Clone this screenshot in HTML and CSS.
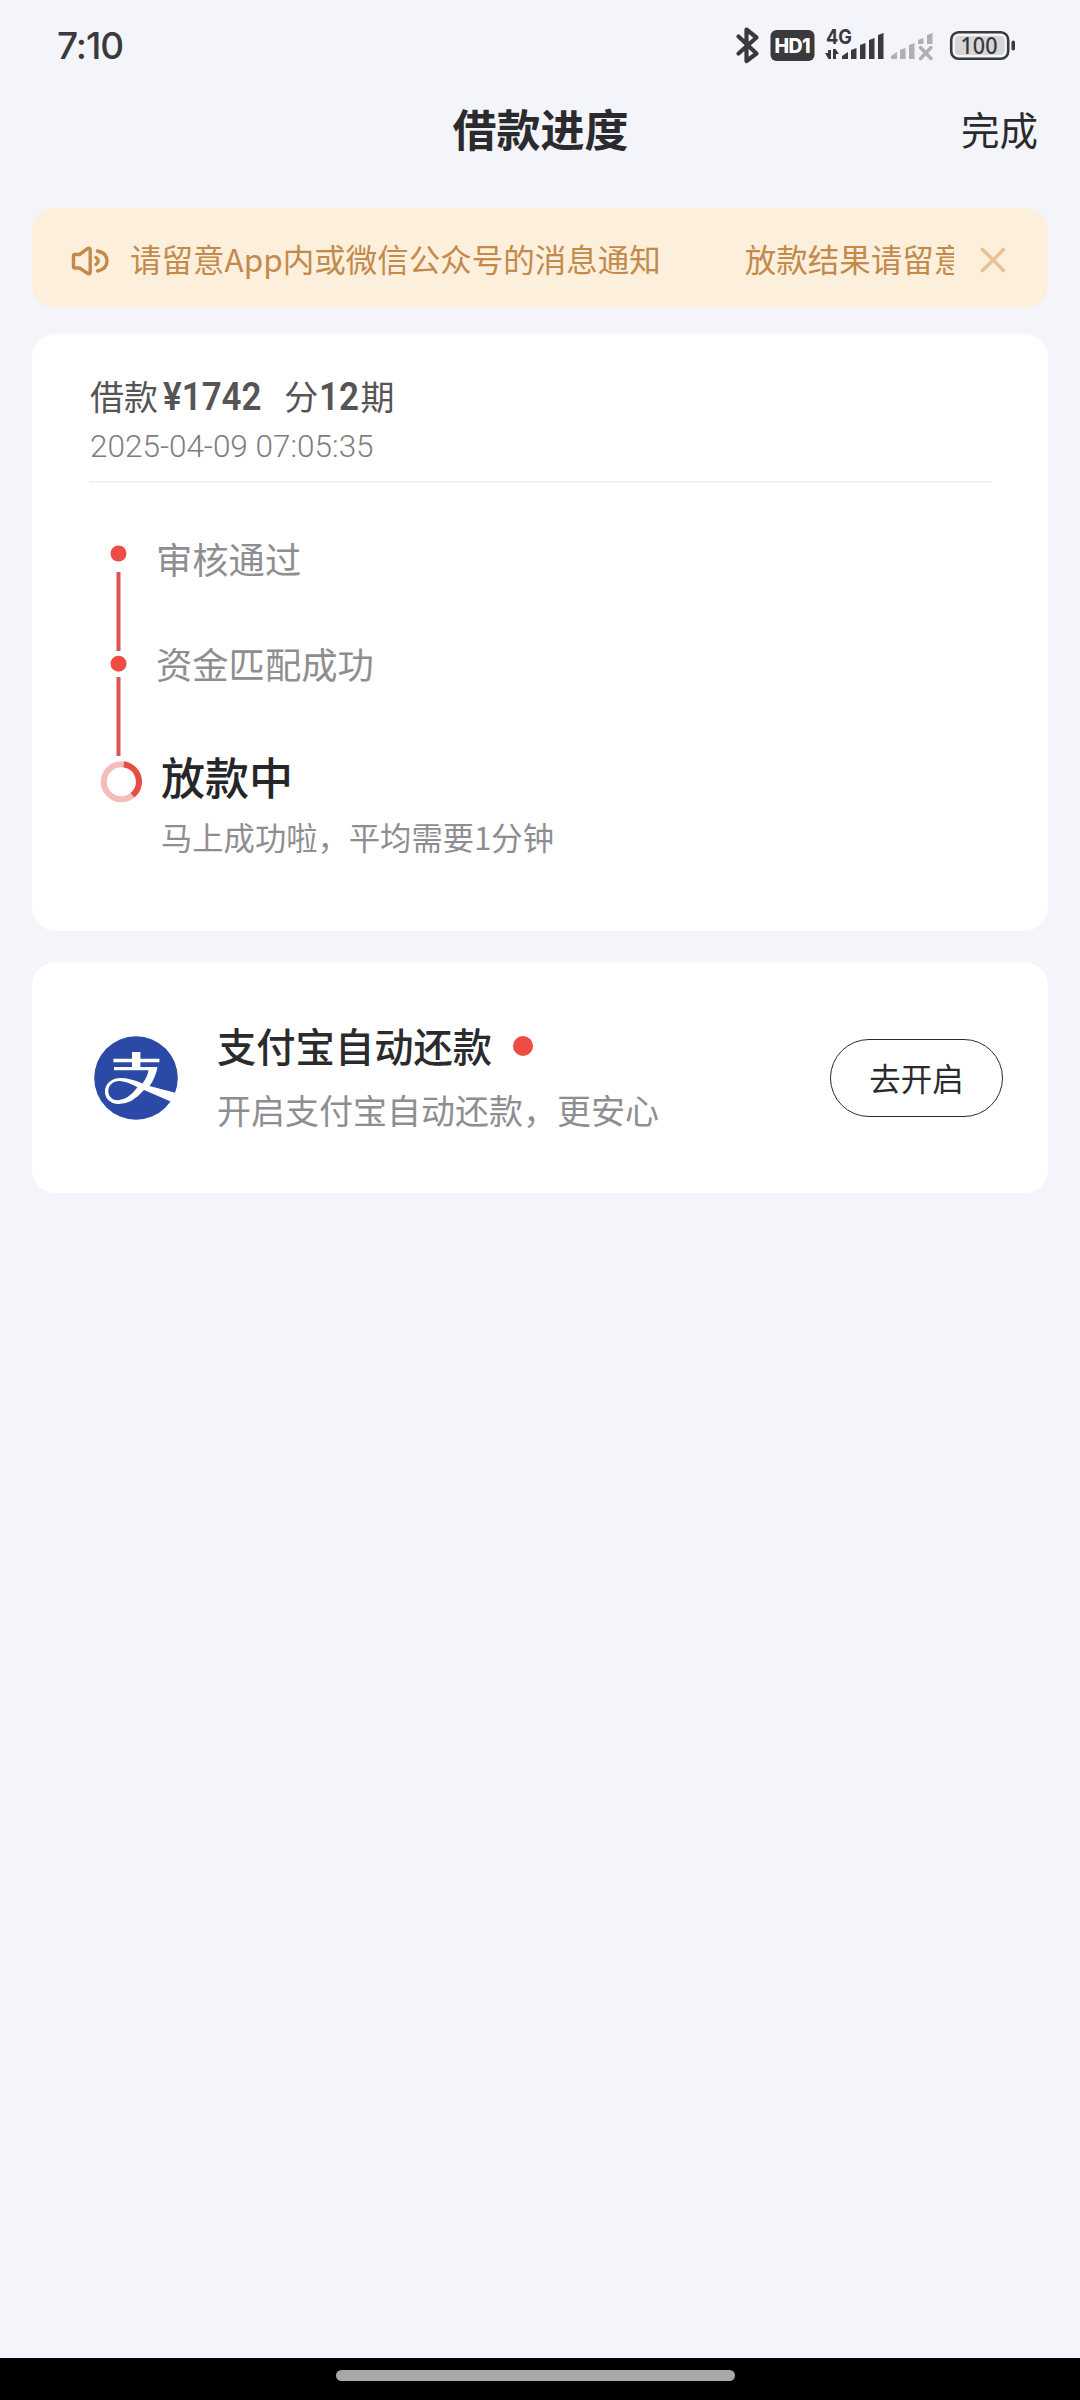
FILE: index.html
```html
<!DOCTYPE html>
<html lang="zh-CN">
<head>
<meta charset="utf-8">
<title>借款进度</title>
<link rel="stylesheet" href="styles.css">
</head>
<body>
<div class="screen">
  <div class="statusbar">
    <span class="clock">7:10</span>
    <svg class="status-icons" width="284" height="44" viewBox="734 22 284 44">
      <path class="bt" d="M738.500 36.500L756.500 53.500L746.500 61V29.500L756.500 37.500L738.500 53.500"/>
      <rect x="770.500" y="30" width="44" height="31" rx="6" fill="#3a3a3c"/>
      <text class="hd" x="792.500" y="52.500" textLength="36">HD1</text>
      <text class="net" x="826" y="44" textLength="26" lengthAdjust="spacingAndGlyphs">4G</text>
      <path fill="#3a3a3c" d="M825 53h3v-3h3v9h-2.500zM833 49h2.500l3.500 5h-3v5h-3z"/>
      <path fill="#3a3a3c" d="M842 59v-3l6-4v7zM851 59v-9l5.500-2v11zM860 59V45l5.500-2v16zM869 59V40l5.500-2v21zM878 59V35l5.500-2v26z"/>
      <path fill="#b0b0b3" d="M891 59v-3l6-4v7zM900 59v-9l5.500-2v11zM909 59V45l5.500-2v16zM918 44v-4l5.500-2v6zM927 44V35l5.500-2v11z"/>
      <path d="M920.500 47.500l10.500 11M931 47.500l-10.500 11" stroke="#b0b0b3" stroke-width="3.500" stroke-linecap="round"/>
      <rect x="951.200" y="32.200" width="57" height="26.600" rx="7.500" fill="none" stroke="#3a3a3c" stroke-width="2.600"/>
      <rect x="955" y="36" width="49.500" height="19" rx="4" fill="#d6d6d8"/>
      <rect x="1011.500" y="40.500" width="3.500" height="10" rx="1.700" fill="#3a3a3c"/>
      <text class="bat" x="979" y="53.800" textLength="37" lengthAdjust="spacingAndGlyphs">100</text>
    </svg>
  </div>
  <header class="navbar">
    <h1 class="nav-title">借款进度</h1>
    <span class="nav-done">完成</span>
  </header>
  <div class="notice">
    <svg class="speaker" width="40" height="34" viewBox="0 0 40 34">
      <path d="M5 10.500h4.500L17.500 4.700q2.700-1.500 2.700 1.200v22.200q0 2.700-2.700 1.200L9.500 24H5q-1.500 0-1.500-1.500V12q0-1.500 1.500-1.500z"/>
      <path d="M26 13.500q4.500 3.500 0 7M27.500 7q9.500 2 9.500 10t-9.500 10"/>
    </svg>
    <div class="marquee"><span>请留意App内或微信公众号的消息通知</span><span>放款结果请留意</span></div>
    <svg class="close" width="26" height="26" viewBox="0 0 26 26"><path d="M2.500 2.500l21 21M23.500 2.500l-21 21"/></svg>
  </div>
  <section class="card loan">
    <div class="loan-head">
      <div class="loan-title">借款<b class="amount">¥1742</b>分<b class="terms">12</b>期</div>
      <div class="loan-time">2025-04-09 07:05:35</div>
    </div>
    <div class="progress">
      <svg class="track" width="46" height="270" viewBox="0 0 46 270">
        <circle cx="20.500" cy="13.500" r="8" fill="#ee4c44"/>
        <rect x="18.500" y="32" width="4" height="79" fill="#de5452"/>
        <circle cx="20.500" cy="123.700" r="8" fill="#ee4c44"/>
        <rect x="18.500" y="137" width="4" height="79" fill="#de5452"/>
        <circle cx="23.300" cy="241.700" r="17.500" fill="none" stroke="#f5bcbc" stroke-width="6"/>
        <path d="M25.800 224.300A17.500 17.500 0 0 1 34.500 255.200" fill="none" stroke="#e84c46" stroke-width="6"/>
      </svg>
      <div class="steps">
        <div class="step">审核通过</div>
        <div class="step">资金匹配成功</div>
        <div class="step current">放款中</div>
        <div class="step-note">马上成功啦，平均需要1分钟</div>
      </div>
    </div>
  </section>
  <section class="card autopay">
    <svg class="alipay" width="84" height="84" viewBox="0 0 84 84">
      <circle cx="42" cy="42" r="41.800" fill="#2b4aa8"/>
      <path fill="#fff" d="M38 16h8.400v6.700h19v3.600h-19V31H63.500Q61.500 42 55.500 50L84 57.500 79 66.500 50 54Q38 68 25 68C6 68 6 42 27 42Q36 42 48.500 47.500 53.500 41 54.500 34.300H20V31h18v-4.700H19.400v-3.600H38z"/>
      <path fill="#2b4aa8" d="M43.500 51.300Q31 44.500 24.500 45C11 46 11 64 24 64.300Q34 64 43.500 51.300z"/>
    </svg>
    <div class="autopay-text">
      <div class="autopay-title">支付宝自动还款<i class="dot"></i></div>
      <div class="autopay-sub">开启支付宝自动还款，更安心</div>
    </div>
    <button class="open">去开启</button>
  </section>
  <div class="homebar"><i class="pill"></i></div>
</div>
</body>
</html>
```
FILE: styles.css
```css
* { box-sizing: border-box; }
body { margin: 0; }
.screen {
  width: 1080px; height: 2400px; overflow: hidden;
  display: flex; flex-direction: column;
  background: #f4f5fa; color: #2b2b2d;
  font-family: "Noto Sans CJK SC", sans-serif;
}
.statusbar { height: 88px; padding: 22px 62px 0 57px; display: flex; justify-content: space-between; align-items: flex-start; }
.clock { font: 500 37px/48px Inter, sans-serif; letter-spacing: -1.1px; color: #3a3a3c; }
.status-icons { display: block; }
.bt { fill: none; stroke: #3a3a3c; stroke-width: 4.2; stroke-linejoin: round; stroke-linecap: round; }
.hd { font: 800 19.5px Inter, sans-serif; fill: #fff; text-anchor: middle; }
.net { font: 700 20.5px Inter, sans-serif; fill: #3a3a3c; }
.bat { font: 500 23px "Noto Sans", sans-serif; fill: #3a3a3c; text-anchor: middle; }
.navbar { height: 120px; padding: 0 42px 41px 43px; display: grid; grid-template-columns: 1fr auto 1fr; align-items: center; }
.nav-title { grid-column: 2; margin: 0; font-size: 44px; line-height: 60px; font-weight: 700; }
.nav-done { justify-self: end; font-size: 38.500px; line-height: 60px; }
.notice { height: 100px; margin: 0 32px 26px; padding: 0 42px 0 38px; border-radius: 22px; background: #fcefdb; display: flex; align-items: center; }
.speaker { flex: none; margin-top: 5px; fill: none; stroke: #c38a4b; stroke-width: 3.4; stroke-linecap: round; stroke-linejoin: round; }
.marquee { flex: none; width: 824px; margin: 0 26px 1px 20px; overflow: hidden; white-space: nowrap; display: flex; gap: 84px; font-size: 31.500px; line-height: 48px; color: #c38a4b; }
.close { flex: none; margin-top: 4px; stroke: #e9c393; stroke-width: 3.6; stroke-linecap: round; }
.card { margin: 0 32px; background: #fff; border-radius: 24px; }
.loan { height: 597px; padding: 0 56px; }
.loan-head { height: 149px; margin-left: 1px; padding-top: 38px; border-bottom: 2px solid #f1f1f3; }
.loan-title { padding-left: 1px; font-size: 34px; line-height: 48px; color: #555; white-space: nowrap; }
.loan-title b { display: inline-block; font-family: Roboto, sans-serif; font-weight: 600; font-size: 38px; transform: scaleX(.92); transform-origin: left; }
.amount { margin: 0 14px 0 5px; }
.terms { margin: 0 -2px 0 1px; }
.loan-time { padding: 6px 0 0 1px; font: 300 31.500px/40px Roboto, sans-serif; color: #7e7e80; }
.progress { display: flex; padding: 57px 0 0 10px; }
.track { flex: none; }
.steps { margin-top: -7px; padding: 0 0 0 12px; color: #8e8e92; white-space: nowrap; }
.step { font-size: 36.300px; line-height: 50px; height: 105px; }
.current { margin: 3px 0 0 5px; height: 68px; font-size: 44px; line-height: 60px; font-weight: 500; color: #262628; }
.step-note { margin-left: 5px; font-size: 31.300px; line-height: 46px; }
.autopay { height: 231px; margin-top: 31px; padding: 0 45px 0 62px; display: flex; align-items: center; }
.alipay { flex: none; }
.autopay-text { flex: 1; margin: -3px 0 0 39px; white-space: nowrap; }
.autopay-title { display: flex; align-items: center; font-size: 39.300px; line-height: 60px; font-weight: 500; }
.dot { width: 20px; height: 20px; margin: 2px 0 0 21px; border-radius: 50%; background: #ee4c44; }
.autopay-sub { margin-top: 8px; font-size: 34px; line-height: 54px; color: #8e8e92; }
.open { width: 173px; height: 78px; padding: 0 0 2px; border: 1.500px solid #2b2b2d; border-radius: 39px; background: #fff; color: #2b2b2d; font: 400 31.500px "Noto Sans CJK SC", sans-serif; }
.homebar { height: 42px; margin-top: auto; padding: 12px 9px 0 0; background: #000; }
.pill { display: block; width: 399px; height: 11px; margin: 0 auto; border-radius: 6px; background: #a8a8a8; }
```
